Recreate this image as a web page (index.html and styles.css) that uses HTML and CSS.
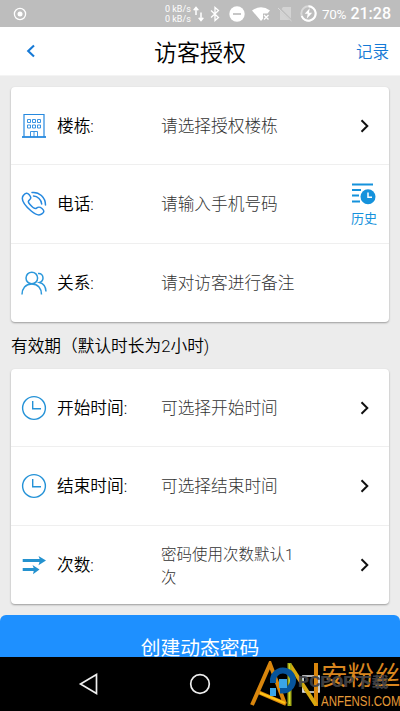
FILE: index.html
```html
<!DOCTYPE html>
<html lang="zh-CN">
<head>
<meta charset="utf-8">
<title>访客授权</title>
<link rel="stylesheet" href="styles.css">
</head>
<body>
<div class="phone">
  <div class="status">
    <svg class="rec" width="14" height="14" viewBox="0 0 14 14"><circle cx="7" cy="7" r="5.6" fill="none" stroke="#fff" stroke-width="1.3"/><circle cx="7" cy="7" r="2.5" fill="#fff"/></svg>
    <div class="speed"><span>0 kB/s</span><span>0 kB/s</span></div>
    <svg class="updown" width="11" height="16" viewBox="0 0 11 16" fill="none" stroke="#fff" stroke-width="1.5"><path d="M3 9V2M.7 4.2 3 1.5l2.3 2.7M8 6.5v7M5.7 11.8 8 14.5l2.3-2.7"/></svg>
    <svg class="bt" width="10" height="16" viewBox="0 0 10 16" fill="none" stroke="#fff" stroke-width="1.3"><path d="M1 4.5 8.5 11.5 5 14.5V1.5l3.5 3L1 11.5"/></svg>
    <svg class="dnd" width="16" height="16" viewBox="0 0 16 16"><circle cx="8" cy="8" r="7.7" fill="#fff"/><path d="M4 8h8" stroke="#bdbdbd" stroke-width="1.7"/></svg>
    <svg class="wifi" width="19" height="16" viewBox="0 0 19 16"><path d="M0 4.5Q9-1.8 18 4.5L15.5 7.5H11V12.8L9 15Z" fill="#fff"/><path d="m12 9 4.5 4.5m0-4.5L12 13.5" stroke="#fff" stroke-width="1.4"/></svg>
    <svg class="sim" width="15" height="16" viewBox="0 0 15 16"><path d="M5 1h8v13H2V5z" fill="#d3d3d3"/><path d="m0 1 14 14" stroke="#bdbdbd" stroke-width="2.2"/><path d="m0 2 13.5 13" stroke="#dadada" stroke-width="1"/></svg>
    <svg class="bat" width="17" height="17" viewBox="0 0 17 17"><circle cx="8.5" cy="8.5" r="7.2" fill="none" stroke="#d9d9d9" stroke-width="2"/><path d="M8.5 1.3A7.2 7.2 0 1 1 1.7 11" fill="none" stroke="#fff" stroke-width="2"/><path d="m9.7 3.3-5 5.5h3l-1 4.9 5.5-6H9z" fill="#fff"/></svg>
    <span class="pct">70%</span>
    <span class="time">21:28</span>
  </div>
  <header class="top">
    <svg class="back" width="10" height="14" viewBox="0 0 10 14" fill="none" stroke="#1579d6" stroke-width="2.1"><path d="M8 1.5 2.2 7 8 12.5"/></svg>
    <h1>访客授权</h1>
    <a>记录</a>
  </header>
  <main class="content">
    <section class="card">
      <div class="row">
        <svg class="icon" width="26" height="26" viewBox="0 0 26 26" fill="none" stroke="#2689df" stroke-width="1.2"><path d="M3 24V1.5h20V24"/><path d="M6.500 6.500h3v3h-3zM11.500 6.500h3v3h-3zM16.500 6.500h3v3h-3zM6.500 12h3v3h-3zM11.500 12h3v3h-3zM16.500 12h3v3h-3zM9.500 24v-5.500h7V24M13 18.500V24" stroke-width=".9"/><path d="M1 24h24" stroke-width="1.8"/></svg>
        <span class="label">楼栋:</span><span class="value">请选择授权楼栋</span>
        <svg class="chev" width="10" height="14" viewBox="0 0 10 14"><path d="m1.5 1.3 5.8 5.7-5.8 5.7"/></svg>
      </div>
      <div class="row">
        <svg class="icon" width="26" height="26" viewBox="0 0 26 26" fill="none" stroke="#2689df" stroke-width="1.5" stroke-linecap="round"><path d="M2.3 4.5C4.5 1.9 6.3 1.5 8 3.500c2.200 2.600 2.400 3.900.5 5.300-1.800 1.400-1.500 2.500.7 5 2.700 3 4.700 4.700 6.300 3.400 1.900-1.600 3-1.700 5.500.3 2.500 2 2.300 3.500.2 5.200-2.800 2.300-6.200 1.500-11-2.700C3.500 14.200-.8 8.700 2.300 4.500Z"/><path d="M11 1.500C18 .5 24.500 6.500 24.500 14M12.500 5c4 0 8 4 8.200 8"/></svg>
        <span class="label">电话:</span><span class="value">请输入手机号码</span>
        <div class="history">
          <svg width="26" height="22" viewBox="0 0 26 22"><path d="M1 1.500h21M1 7h9M1 12.500h7M1 18.500h8" stroke="#1592dc" stroke-width="1.900"/><circle cx="17" cy="13.700" r="7.500" fill="#1592dc"/><path d="M17 9.500v4.700h4" fill="none" stroke="#fff" stroke-width="1.500"/></svg>
          <span>历史</span>
        </div>
      </div>
      <div class="row">
        <svg class="icon" width="26" height="26" viewBox="0 0 26 26" fill="none" stroke="#2c98db" stroke-width="1.500"><circle cx="10.800" cy="8" r="5.800"/><path d="M1 24.500c0-6 3.500-10.500 9.800-10.500s9.700 4.500 9.700 10.500M17 3.500c3-.5 5 1.500 5 4.500 0 2-1.300 3.800-3.500 4.500 3.800 1 6.300 4.300 6.500 9"/></svg>
        <span class="label">关系:</span><span class="value">请对访客进行备注</span>
      </div>
    </section>
    <h2>有效期（默认时长为2小时)</h2>
    <section class="card">
      <div class="row">
        <svg class="icon" width="26" height="26" viewBox="0 0 26 26" fill="none" stroke="#2492d7" stroke-width="1.400"><circle cx="13" cy="13" r="11.400"/><path d="M11.700 6v7.800H20"/></svg>
        <span class="label">开始时间:</span><span class="value">可选择开始时间</span>
        <svg class="chev" width="10" height="14" viewBox="0 0 10 14"><path d="m1.500 1.300 5.800 5.700-5.800 5.700"/></svg>
      </div>
      <div class="row">
        <svg class="icon" width="26" height="26" viewBox="0 0 26 26" fill="none" stroke="#2492d7" stroke-width="1.400"><circle cx="13" cy="13" r="11.400"/><path d="M11.700 6v7.800H20"/></svg>
        <span class="label">结束时间:</span><span class="value">可选择结束时间</span>
        <svg class="chev" width="10" height="14" viewBox="0 0 10 14"><path d="m1.500 1.300 5.800 5.700-5.800 5.700"/></svg>
      </div>
      <div class="row">
        <svg class="icon" width="26" height="26" viewBox="0 0 26 26" fill="#2492cf"><path d="M1.700 7h17L17.500 4l7.500 4.500-7.500 4.800L18.500 10H1.700zM1.700 16h11L11.500 13l7 4.500-6.500 4.800.7-3.300h-11z"/></svg>
        <span class="label">次数:</span><span class="value small">密码使用次数默认1次</span>
        <svg class="chev" width="10" height="14" viewBox="0 0 10 14"><path d="m1.500 1.300 5.800 5.700-5.800 5.700"/></svg>
      </div>
    </section>
  </main>
  <div class="action">创建动态密码</div>
  <nav class="nav">
    <svg width="22" height="24" viewBox="0 0 22 24"><path d="M18.500 2.500v19L2.500 12z"/></svg>
    <svg width="22" height="24" viewBox="0 0 22 24"><circle cx="11" cy="12" r="9.300"/></svg>
    <svg width="22" height="24" viewBox="0 0 22 24"><path d="M3 4h16v16H3z"/></svg>
  </nav>
  <div class="watermark">
    <svg class="mark" width="72" height="48" viewBox="0 0 72 48" fill="none"><path d="M2 44 20 3l15 40M8 31l28 12" stroke="#d9860d" stroke-width="4"/><path d="m10 32 25 10" stroke="#ffc414" stroke-width="2"/><path d="M66 2v43" stroke="#d9860d" stroke-width="4"/><path d="m40 4 26 40" stroke="#d9a90f" stroke-width="4"/><path d="M39.500 2v43" stroke="#a5ad18" stroke-width="4"/><path d="M39.500 3v40" stroke="#d7d928" stroke-width="1"/>
    <path d="M23 22v-2a10 10 0 1 1 10 9.500h-3" stroke="#07549b" stroke-width="6"/><path d="M29 18h8v9h-8zM20 27h6v8h-6z" fill="#3aa5e8"/></svg>
    <span class="cn">安粉丝</span>
    <span class="domain">ANFENSI.COM</span>
    <span class="pcpop">PCPOP下载</span>
  </div>
</div>
</body>
</html>
```
FILE: styles.css
```css
* { box-sizing: border-box; }
body { margin: 0; background: #ececec; font-family: Roboto, "Noto Sans CJK SC", sans-serif; color: #111; }
.phone { position: relative; width: 400px; height: 711px; display: flex; flex-direction: column; overflow: hidden; }
.status { height: 27px; flex: none; background: #bdbdbd; display: flex; align-items: center; color: #fff; padding: 0 9px 0 13px; }
.status svg { flex: none; }
.speed { display: flex; flex-direction: column; margin-left: 138px; width: 27px; font-size: 9px; line-height: 10px; white-space: nowrap; }
.updown { margin-left: 1px; }
.bt { margin-left: 6px; }
.dnd { margin-left: 9px; }
.wifi { margin-left: 7px; }
.sim { margin-left: 7px; }
.bat { margin-left: 7px; }
.pct { margin-left: 5px; width: 25px; font-size: 13.5px; letter-spacing: -.3px; white-space: nowrap; }
.time { margin-left: auto; font-size: 16px; font-weight: 500; }
.top { height: 49px; flex: none; background: #fff; display: grid; grid-template-columns: 60px 1fr 60px; align-items: center; border-bottom: 1px solid #f4f4f4; }
.back { margin-left: 26px; }
.top h1 { margin: 0; font-size: 23px; line-height: 34px; font-weight: 350; text-align: center; color: #000; padding-top: 5px; }
.top a { color: #1579d6; font-size: 16.5px; font-weight: 350; padding: 0 11px 0 0; text-align: right; white-space: nowrap; }
.content { padding: 11px 11px 0; flex: none; }
.card { height: 235px; background: #fff; border-radius: 4px; box-shadow: 0 1px 2px rgba(0,0,0,.35); display: grid; grid-template-rows: repeat(3, 1fr); }
.row { display: flex; align-items: center; padding-left: 10px; border-bottom: 1px solid #efefef; min-height: 0; }
.row:last-child { border-bottom: 0; }
.icon { flex: none; margin-right: 10px; }
.label { width: 104px; flex: none; font-size: 16.7px; line-height: 24px; padding-top: 3px; font-weight: 350; color: #000; }
.value { width: 142px; flex: none; font-size: 16.7px; line-height: 24px; padding-top: 2px; font-weight: 300; color: #333; }
.small { font-size: 15.5px; line-height: 23px; padding-top: 4px; }
.chev { flex: none; margin-left: 57px; fill: none; stroke: #111; stroke-width: 2; }
.history { width: 40px; margin-left: 41px; display: flex; flex-direction: column; align-items: center; color: #1592dc; font-size: 13px; line-height: 19px; gap: 4px; padding-top: 4px; }
.content h2 { margin: 0; height: 47px; font-size: 16.7px; line-height: 50px; font-weight: 350; color: #000; }
.action { margin-top: 11px; height: 42px; flex: none; background: #1e90ff; border-radius: 6px 6px 0 0; color: #fff; font-size: 19.8px; line-height: 67px; text-align: center; overflow: hidden; }
.nav { height: 54px; flex: none; background: #000; display: flex; justify-content: space-between; padding: 15px 78px 0 78px; z-index: 1; }
.nav svg { fill: none; stroke: #eee; stroke-width: 1.7; }
.watermark { position: absolute; right: 0; bottom: 0; width: 150px; height: 50px; z-index: 2; white-space: nowrap; }
.mark { position: absolute; left: 0; top: 0; }
.cn { position: absolute; left: 71px; top: 1px; font-size: 26.5px; line-height: 28px; color: #d9861f; font-weight: 400; }
.domain { position: absolute; left: 71px; top: 32px; font: 14.5px/16px "Liberation Sans", sans-serif; color: #e49a38; transform: scaleX(.79); transform-origin: left; }
.pcpop { position: absolute; left: 48px; top: 12px; font-size: 14px; line-height: 18px; font-weight: 900; color: rgba(68,68,72,.92); transform: scaleX(1.22); transform-origin: left; }
```
